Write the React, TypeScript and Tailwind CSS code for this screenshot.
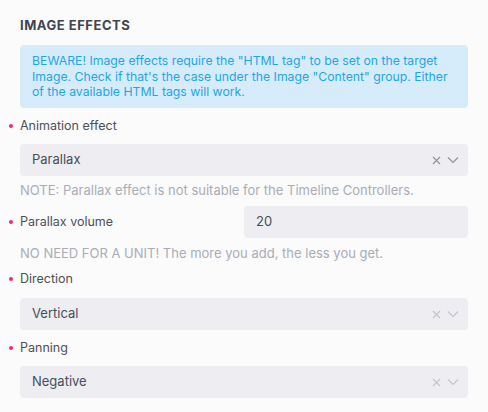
import React from "react";

const font = { fontFamily: "Inter, 'Noto Sans', sans-serif" };

function Chevron() {
  return (
    <svg width="12" height="8" viewBox="0 0 12 8" fill="none" stroke="currentColor" strokeWidth="1.2">
      <path d="M1 1.5l5 5 5-5" />
    </svg>
  );
}

function Cross() {
  return (
    <svg width="9" height="9" viewBox="0 0 9 9" fill="none" stroke="currentColor" strokeWidth="1.1">
      <path d="M1 1l7 7M8 1l-7 7" />
    </svg>
  );
}

function Label({ children }: { children: React.ReactNode }) {
  return (
    <div className="relative flex h-5 items-center text-[12.5px] text-[#4b505a]">
      <span className="absolute left-[-11px] top-[8px] h-[4px] w-[4px] rounded-full bg-[#f2267f]" />
      {children}
    </div>
  );
}

function Select({ value, dim }: { value: string; dim?: boolean }) {
  return (
    <div className="flex h-8 items-center justify-between rounded bg-[#ededf2] pl-3 pr-[9px] text-[13px] text-[#474d59]">
      <span>{value}</span>
      <span className={"flex items-center gap-[6px] " + (dim ? "text-[#c2c5cc]" : "text-[#8d929b]")}>
        <Cross />
        <Chevron />
      </span>
    </div>
  );
}

export default function App() {
  return (
    <div className="h-[412px] w-[488px] bg-[#fbfbfc] px-5" style={font}>
      <h2 className="pt-[17px] text-[13px] font-bold leading-4 tracking-[0.04em] text-[#3f4550]">IMAGE EFFECTS</h2>

      <div className="mt-[12px] rounded bg-[#d6ecfb] px-3 py-2 text-[12.25px] leading-[15.67px] text-[#1ea5ee]">
        BEWARE! Image effects require the "HTML tag" to be set on the target Image. Check if that's the case under the Image "Content" group. Either of the available HTML tags will work.
      </div>

      <div className="mt-[8px]">
        <Label>Animation effect</Label>
      </div>
      <div className="mt-[8px]">
        <Select value="Parallax" />
      </div>
      <p className="mt-1 h-5 text-[13px] leading-5 text-[#a9adb5]">
        NOTE: Parallax effect is not suitable for the Timeline Controllers.
      </p>

      <div className="mt-[6px] grid grid-cols-2 items-center gap-0">
        <Label>Parallax volume</Label>
        <div className="flex h-8 items-center rounded bg-[#ededf2] px-3 text-[13px] text-[#474d59]">20</div>
      </div>
      <p className="mt-[5px] h-5 text-[13px] leading-5 text-[#a9adb5]">
        NO NEED FOR A UNIT! The more you add, the less you get.
      </p>

      <div className="mt-[6px]">
        <Label>Direction</Label>
      </div>
      <div className="mt-[9px]">
        <Select value="Vertical" dim />
      </div>

      <div className="mt-[8px]">
        <Label>Panning</Label>
      </div>
      <div className="mt-[8px]">
        <Select value="Negative" dim />
      </div>
    </div>
  );
}
